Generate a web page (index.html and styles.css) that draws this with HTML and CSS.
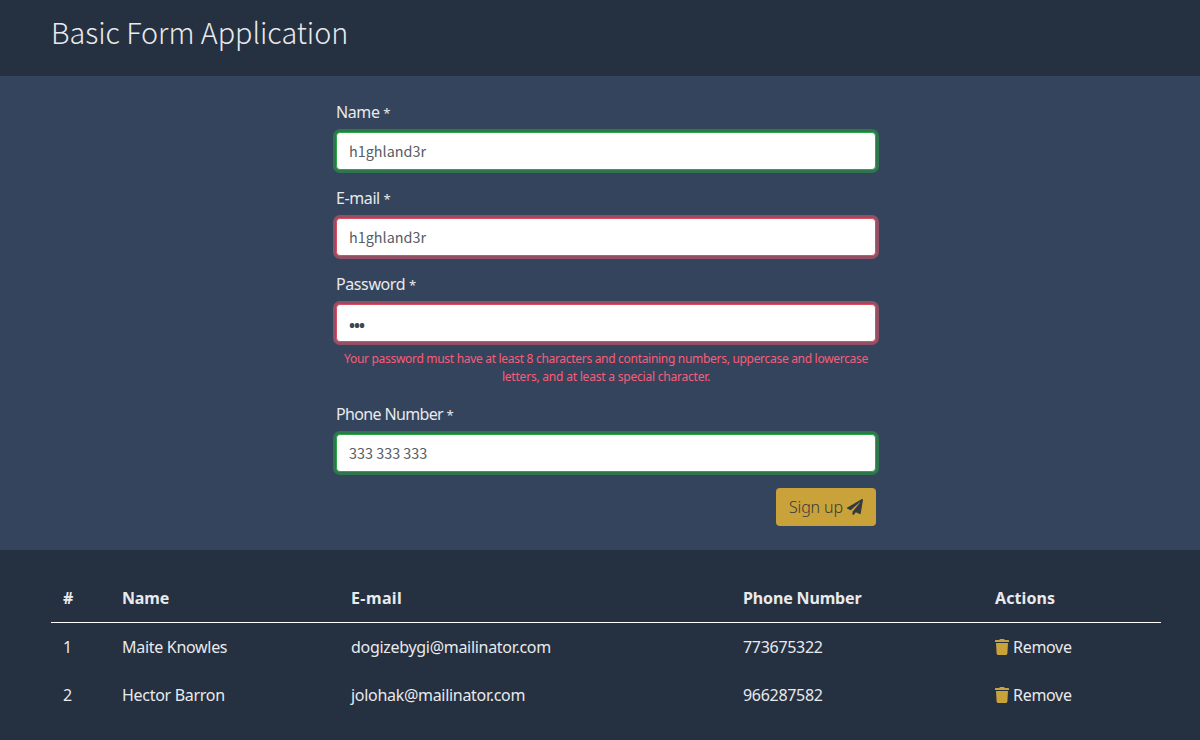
FILE: index.html
```html
<!DOCTYPE html>
<html lang="en">
<head>
<meta charset="utf-8">
<title>Basic Form Application</title>
<link rel="stylesheet" href="styles.css">
</head>
<body>
<header class="header"><h1 class="title">Basic Form Application</h1></header>
<main class="form-section">
  <form class="form">
    <div class="group">
      <label class="label" for="name">Name <small class="star">*</small></label>
      <input class="input valid" id="name" type="text" value="h1ghland3r">
    </div>
    <div class="group">
      <label class="label" for="email">E-mail <small class="star">*</small></label>
      <input class="input invalid" id="email" type="text" value="h1ghland3r">
    </div>
    <div class="group">
      <label class="label" for="password">Password <small class="star">*</small></label>
      <input class="input invalid password" id="password" type="password" value="abc">
      <p class="error"><span class="error-first">Your password must have at least 8 characters and containing numbers, uppercase and lowercase</span><br><span class="error-second">letters, and at least a special character.</span></p>
    </div>
    <div class="group">
      <label class="label label-phone" for="phone">Phone Number <small class="star">*</small></label>
      <input class="input valid" id="phone" type="text" value="333 333 333">
    </div>
    <button class="button" type="button"><span class="button-text">Sign up</span><svg class="plane" viewBox="0 0 512 512"><path fill="currentColor" d="M476 3.200 12.500 270.600c-18.100 10.400-15.800 35.600 2.200 43.200L121 358.400l287.300-253.200c5.500-4.900 13.300 2.600 8.600 8.300L176 407v80.500c0 23.600 28.500 32.900 42.500 15.800L282 426l124.600 52.200c14.200 6 30.400-2.900 33-18.200l72-432C515 7.800 493.300-6.800 476 3.200z"/></svg></button>
  </form>
</main>
<section class="users">
  <table class="table">
    <colgroup><col class="col-id"><col class="col-name"><col class="col-email"><col class="col-phone"><col class="col-actions"></colgroup>
    <thead>
      <tr><th>#</th><th>Name</th><th class="th-email">E-mail</th><th>Phone Number</th><th class="th-actions">Actions</th></tr>
    </thead>
    <tbody>
      <tr><td>1</td><td>Maite Knowles</td><td>dogizebygi@mailinator.com</td><td>773675322</td>
        <td><span class="remove"><svg class="trash" viewBox="0 0 14 16"><path fill="currentColor" d="M0 1.600Q0 1 .6 1H4.200L4.700.3Q4.900 0 5.300 0H8.700Q9.100 0 9.300.3L9.800 1H13.400Q14 1 14 1.600V3H0zM1 4H13L12.400 14.600Q12.300 16 11 16H3Q1.700 16 1.600 14.600z"/></svg>Remove</span></td></tr>
      <tr><td>2</td><td>Hector Barron</td><td>jolohak@mailinator.com</td><td>966287582</td>
        <td><span class="remove"><svg class="trash" viewBox="0 0 14 16"><path fill="currentColor" d="M0 1.600Q0 1 .6 1H4.200L4.700.3Q4.900 0 5.300 0H8.700Q9.100 0 9.300.3L9.800 1H13.400Q14 1 14 1.600V3H0zM1 4H13L12.400 14.600Q12.300 16 11 16H3Q1.700 16 1.600 14.600z"/></svg>Remove</span></td></tr>
    </tbody>
  </table>
</section>
</body>
</html>
```
FILE: styles.css
```css
* { box-sizing: border-box; }
body {
  margin: 0;
  min-height: 740px;
  background: #253040;
  color: #e8eaed;
  font: 16px/24px "Noto Sans", "Open Sans", sans-serif;
  overflow: hidden;
}
.header { height: 76px; padding: 13px 51px; }
.title {
  margin: 0;
  font: 300 28.8px/38px "Noto Sans CJK SC", sans-serif;
  letter-spacing: -0.04px;
}
.form-section { height: 474px; padding-top: 24px; background: #34445c; }
.form { width: 540px; margin-left: 336px; }
.group { margin-bottom: 16px; }
.label { display: block; height: 24px; margin-bottom: 8px; letter-spacing: -0.4px; }
.label-phone { letter-spacing: -0.65px; }
.star { font-size: 13px; }
.input {
  display: block;
  width: 100%;
  height: 38px;
  padding: 5px 12px 7px;
  border: 1px solid;
  border-radius: 4px;
  background: #fff;
  color: #565c63;
  font: 400 14.4px/24px "Noto Sans CJK SC", sans-serif;
  outline: none;
}
.password {
  padding: 8px 12px 4px;
  color: #3f464d;
  font-family: "Noto Sans", sans-serif;
  font-size: 16px;
  font-weight: 700;
  letter-spacing: -1px;
}
.valid { border-color: #28a745; box-shadow: 0 0 0 3px #2f764f; }
.invalid { border-color: #dc4d60; box-shadow: 0 0 0 3px #934f63; }
.error {
  height: 36px;
  margin: 8px 0 0;
  color: #fa5c78;
  font-size: 12px;
  line-height: 18px;
  text-align: center;
  white-space: nowrap;
}
.error-first { letter-spacing: -0.3px; }
.error-second { letter-spacing: -0.21px; }
.button {
  display: flex;
  align-items: center;
  gap: 4px;
  width: 100px;
  height: 38px;
  margin-left: auto;
  padding: 0 12px 0 13px;
  border: 0;
  border-radius: 4px;
  background: #caa23a;
  color: #343a40;
  font: 300 16px/24px "Noto Sans", sans-serif;
  white-space: nowrap;
}
.button-text { letter-spacing: -0.15px; }
.plane { width: 16px; height: 16px; flex: none; }
.users { padding: 24px 39px 0 51px; }
.table { width: 1110px; table-layout: fixed; border-collapse: separate; border-spacing: 0; }
.col-id { width: 59px; }
.col-name { width: 229px; }
.col-email { width: 392px; }
.col-phone { width: 252px; }
.col-actions { width: 178px; }
th, td { height: 48px; padding: 12px 0 12px 12px; text-align: left; letter-spacing: -0.3px; }
th { height: 49px; border-bottom: 1px solid #fff; font-weight: 700; letter-spacing: -0.15px; }
.th-email { letter-spacing: 0.4px; }
.th-actions { letter-spacing: 0.1px; }
.remove { display: flex; align-items: center; gap: 4px; }
.trash { width: 14px; height: 16px; color: #caa23a; }
```
